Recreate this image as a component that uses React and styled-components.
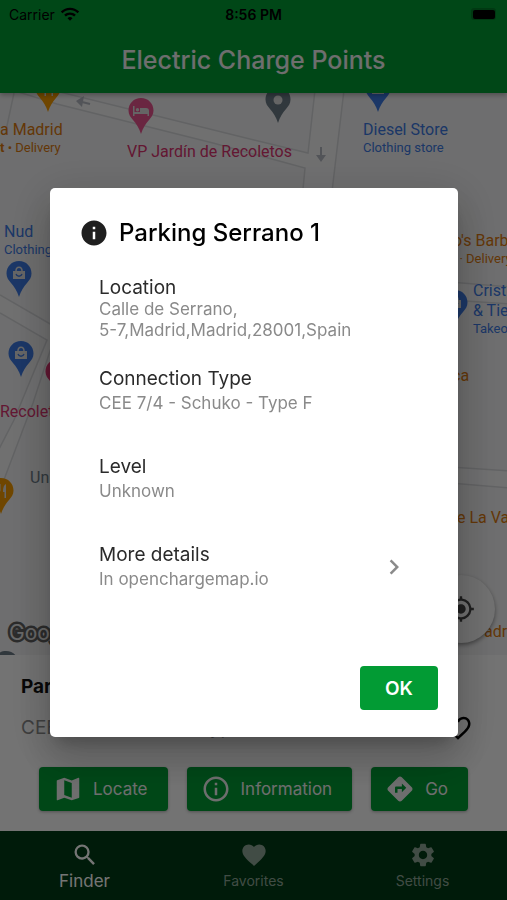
import React from 'react'
import styled, { createGlobalStyle } from 'styled-components'
import {
    MdChevronRight,
    MdDirections,
    MdFavorite,
    MdFavoriteBorder,
    MdInfo,
    MdInfoOutline,
    MdMap,
    MdMyLocation,
    MdSearch,
    MdSettings,
    MdWifi
} from 'react-icons/md'

const GlobalStyle = createGlobalStyle`
    * {
        box-sizing: border-box;
    }
    body {
        margin: 0;
        font-family: Inter, "Liberation Sans", sans-serif;
        background: #fff;
    }
    h1, h2, h3, p, dl, dt, dd {
        margin: 0;
    }
    button {
        font-family: inherit;
        border: 0;
        padding: 0;
        cursor: pointer;
    }
`

const Screen = styled.div`
    display: flex;
    flex-direction: column;
    min-height: 100vh;
`

/* ---------- header ---------- */

const Header = styled.header`
    position: relative;
    z-index: 1;
    background: #009b34;
    box-shadow: 0 2px 5px rgba(0, 0, 0, 0.3);
`
const StatusBar = styled.div`
    display: grid;
    grid-template-columns: 1fr auto 1fr;
    align-items: center;
    height: 28px;
    padding: 0 9px;
    font-size: 14px;
    color: #000;
`
const Carrier = styled.span`
    display: flex;
    align-items: center;
    gap: 5px;
`
const Clock = styled.span`
    font-weight: 600;
`
const Battery = styled.svg`
    justify-self: end;
    width: 28px;
    height: 14px;
`
const Title = styled.h1`
    padding: 15px 0 16px;
    font-size: 25px;
    line-height: 34px;
    font-weight: 500;
    text-align: center;
    color: #f0f0f0;
`

/* ---------- map ---------- */

const Map = styled.main`
    position: relative;
    flex: 1;
    min-height: 300px;
    overflow: hidden;
    background: #f0f0f1;
`
const Roads = styled.svg`
    position: absolute;
    top: 0;
    left: 0;
    width: 507px;
    height: 562px;
`
const Place = styled.div`
    position: absolute;
    left: ${props => props.$x}px;
    top: ${props => props.$y}px;
    padding-top: 1px;
    font-family: Roboto, sans-serif;
    font-size: 16px;
    line-height: 20px;
    white-space: nowrap;
    color: ${props => props.$color};

    small {
        display: block;
        font-size: 13px;
        line-height: 16px;
    }
`
const PinSvg = styled.svg`
    position: absolute;
    left: ${props => props.$x - 13}px;
    top: ${props => props.$y}px;
    width: 26px;
    height: 36px;
`
const GoogleMark = styled.span`
    position: absolute;
    left: 9px;
    bottom: 8px;
    font-size: 21px;
    line-height: 28px;
    font-weight: 400;
    color: #e4e4e4;
    -webkit-text-stroke: 5px #606060;
    paint-order: stroke fill;
`
const LocateMe = styled.button`
    position: absolute;
    right: 12px;
    bottom: 12px;
    display: flex;
    align-items: center;
    justify-content: center;
    width: 68px;
    height: 68px;
    border-radius: 50%;
    background: #f6f6f6;
    color: #444;
    box-shadow: 0 2px 4px rgba(0, 0, 0, 0.4);
`

/* ---------- selected point ---------- */

const Sheet = styled.section`
    padding: 20px 21px;
    background: #fafafa;
`
const SheetTitle = styled.h2`
    font-size: 19px;
    line-height: 24px;
    font-weight: 700;
    color: #111;
`
const SheetRow = styled.div`
    display: flex;
    align-items: center;
    justify-content: space-between;
    padding: 14px 13px 0 0;
    font-size: 19px;
    line-height: 30px;
    color: #8a8a8a;
`
const HeartButton = styled.button`
    display: flex;
    background: none;
    color: #000;
`
const Actions = styled.div`
    display: flex;
    justify-content: center;
    gap: 19px;
    padding-top: 24px;
`
const Button = styled.button`
    display: flex;
    align-items: center;
    gap: 10px;
    height: 44px;
    padding: 0 20px 0 14px;
    border-radius: 4px;
    background: #009b34;
    color: #f0f0f0;
    font-size: 17px;
    font-weight: 400;
    box-shadow: 0 1px 3px rgba(0, 0, 0, 0.3);
`

/* ---------- bottom navigation ---------- */

const Nav = styled.nav`
    display: flex;
    height: 69px;
    background: #003c16;
`
const NavItem = styled.button`
    flex: 1;
    display: flex;
    flex-direction: column;
    align-items: center;
    padding-top: 10px;
    background: none;
    font-size: ${props => (props.$active ? 17 : 14)}px;
    line-height: 24px;
    color: ${props => (props.$active ? '#fff' : '#8fa596')};
`

/* ---------- dialog ---------- */

const Overlay = styled.div`
    position: fixed;
    inset: 0;
    z-index: 2;
    display: flex;
    align-items: center;
    justify-content: center;
    padding: 25px 49px 0 50px;
    background: rgba(0, 0, 0, 0.54);
`
const Dialog = styled.div`
    width: 100%;
    max-width: 560px;
    padding: 30px 20px 27px 29px;
    border-radius: 5px;
    background: #fff;
    box-shadow: 0 11px 15px -7px rgba(0, 0, 0, 0.2), 0 24px 38px 3px rgba(0, 0, 0, 0.14), 0 9px 46px 8px rgba(0, 0, 0, 0.12);
`
const DialogTitle = styled.h2`
    display: flex;
    align-items: center;
    gap: 10px;
    font-size: 24px;
    line-height: 30px;
    font-weight: 500;
    color: #000;

    svg {
        color: #1f1f1f;
    }
`
const Details = styled.dl`
    padding: 23px 0 55px 20px;
`
const Tile = styled.div`
    display: flex;
    align-items: center;
    justify-content: space-between;
    height: ${props => (props.$tight ? 76 : 88)}px;
    padding-right: 29px;
    color: #8a8a8a;
`
const Term = styled.dt`
    font-size: 19px;
    line-height: 22px;
    color: #2b2b2b;
`
const Value = styled.dd`
    padding-top: ${props => (props.$tight ? 0 : 3)}px;
    font-size: 17px;
    line-height: 21px;
    color: #8a8a8a;

    a {
        color: inherit;
        text-decoration: none;
    }
`
const DialogActions = styled.div`
    display: flex;
    justify-content: flex-end;
`
const OkButton = styled.button`
    width: 78px;
    height: 44px;
    border-radius: 4px;
    background: #029b34;
    color: #fff;
    font-size: 19px;
    font-weight: 600;
`

const ORANGE = '#d9780f'
const BLUE = '#3c78e0'
const PINK = '#d8336e'
const SLATE = '#6b7a86'

const glyphs = {
    bag: <g><path d="M7 10h12v8H7z" fill="#ddd" /><path d="M10 10c0-5 6-5 6 0" stroke="#ddd" strokeWidth="1.5" fill="none" /><path d="M10 13c1 3 5 3 6 0" stroke={BLUE} strokeWidth="1.3" fill="none" /></g>,
    bed: <path d="M5 8h1.500v6H12v-4h6q3 0 3 3v5h-1.500v-2h-13v2H5zM9.500 10a1.700 1.700 0 1 1 0 3.400a1.700 1.700 0 0 1 0-3.400" fill="#ddd" />,
    dot: <circle cx="13" cy="13" r="4.500" fill="#ddd" />,
    food: <path d="M8 6v6q0 2 1.500 2v6h1.500v-6q1.500 0 1.500-2V6M18 6q-3 1-3 8h1.500v6H18z" fill="#ddd" />
}

const Pin = ({ x, y, color, glyph }) => (
    <PinSvg $x={x} $y={y} viewBox="0 0 26 36">
        <path d="M13 0C5.800 0 .5 5.500.5 12.500c0 4 2 6.500 4.500 9.500 3.500 4 6 8 8 14 2-6 4.500-10 8-14 2.500-3 4.500-5.500 4.500-9.500C25.500 5.500 20.200 0 13 0z" fill={color} />
        {glyphs[glyph]}
    </PinSvg>
)

const App = () => {
    return (
        <>
            <GlobalStyle />
            <Screen>
                <Header>
                    <StatusBar>
                        <Carrier>Carrier <MdWifi size={20} /></Carrier>
                        <Clock>8:56 PM</Clock>
                        <Battery viewBox="0 0 28 14">
                            <rect x="1" y="1" width="25" height="12" rx="3" fill="#000" opacity="0.2" />
                            <rect x="3" y="3" width="22" height="9" rx="2" fill="#000" />
                        </Battery>
                    </StatusBar>
                    <Title>Electric Charge Points</Title>
                </Header>

                <Map>
                    <Roads viewBox="0 93 507 562">
                        <g fill="#f4f4f5" stroke="#d6d7da" strokeWidth="1.5">
                            <path d="M12 90L57 104L213 143L305 168L302 200L331 200L344 90L315 90L308 153L254 140L60 92" />
                            <path d="M0 295L52 325V345L33 403L5 477L-4 500V455L14 420L47 340L0 313" />
                            <path d="M450 282L510 287V304L450 300" />
                            <path d="M450 467L510 471V488L450 483" />
                        </g>
                        <path d="M14 93L5 135" stroke="#d6d7da" strokeWidth="1.5" />
                        <g fill="none" stroke="#b4b7c0" strokeWidth="2">
                            <path d="M90 104L78 101" />
                            <path d="M321 147V158" />
                        </g>
                        <path d="M84 96L76 101L82 107zM316 155L321 162L326 155z" fill="#b4b7c0" />
                    </Roads>
                    <Pin x={48} y={-17} color="#f29900" glyph="food" />
                    <Pin x={141} y={5} color="#e8548f" glyph="bed" />
                    <Pin x={278} y={-6} color={SLATE} glyph="dot" />
                    <Pin x={378} y={-17} color={BLUE} glyph="bag" />
                    <Pin x={19} y={168} color={BLUE} glyph="bag" />
                    <Pin x={21} y={248} color={BLUE} glyph="bag" />
                    <Pin x={58} y={266} color={PINK} />
                    <Pin x={1} y={385} color="#f29900" glyph="food" />
                    <Pin x={455} y={197} color={BLUE} glyph="bag" />
                    <Pin x={6} y={558} color={SLATE} />
                    <Place $x={0} $y={26} $color={ORANGE}>a Madrid<small><b>t</b> • Delivery</small></Place>
                    <Place $x={127} $y={48} $color={PINK}>VP Jardín de Recoletos</Place>
                    <Place $x={363} $y={26} $color={BLUE}>Diesel Store<small>Clothing store</small></Place>
                    <Place $x={4} $y={128} $color={BLUE}>Nud<small>Clothing store</small></Place>
                    <Place $x={0} $y={308} $color={PINK}>Recoletos</Place>
                    <Place $x={30} $y={374} $color={SLATE}>Universidad</Place>
                    <Place $x={453} $y={137} $color={ORANGE}>o's Barbería<small>&nbsp; · Delivery</small></Place>
                    <Place $x={473} $y={187} $color={BLUE}>Cristina<br />&amp; Tienda<small>Takeout</small></Place>
                    <Place $x={452} $y={272} $color={ORANGE}>ca</Place>
                    <Place $x={457} $y={414} $color={ORANGE}>e La Vaca</Place>
                    <Place $x={484} $y={528} $color={ORANGE}>adrid</Place>
                    <GoogleMark>Google</GoogleMark>
                    <LocateMe aria-label="My location"><MdMyLocation size={28} /></LocateMe>
                </Map>

                <Sheet>
                    <SheetTitle>Parking Serrano 1</SheetTitle>
                    <SheetRow>
                        CEE 7/4 - Schuko - Type F
                        <HeartButton aria-label="Add to favorites"><MdFavoriteBorder size={30} /></HeartButton>
                    </SheetRow>
                    <Actions>
                        <Button><MdMap size={30} />Locate</Button>
                        <Button><MdInfoOutline size={30} />Information</Button>
                        <Button><MdDirections size={30} />Go</Button>
                    </Actions>
                </Sheet>

                <Nav>
                    <NavItem $active><MdSearch size={28} />Finder</NavItem>
                    <NavItem><MdFavorite size={28} />Favorites</NavItem>
                    <NavItem><MdSettings size={28} />Settings</NavItem>
                </Nav>
            </Screen>

            <Overlay>
                <Dialog role="dialog" aria-modal="true" aria-labelledby="point-name">
                    <DialogTitle id="point-name"><MdInfo size={30} />Parking Serrano 1</DialogTitle>
                    <Details>
                        <Tile $tight>
                            <div>
                                <Term>Location</Term>
                                <Value $tight>Calle de Serrano,<br />5-7,Madrid,Madrid,28001,Spain</Value>
                            </div>
                        </Tile>
                        <Tile>
                            <div>
                                <Term>Connection Type</Term>
                                <Value>CEE 7/4 - Schuko - Type F</Value>
                            </div>
                        </Tile>
                        <Tile>
                            <div>
                                <Term>Level</Term>
                                <Value>Unknown</Value>
                            </div>
                        </Tile>
                        <Tile>
                            <div>
                                <Term>More details</Term>
                                <Value><a href="#details">In openchargemap.io</a></Value>
                            </div>
                            <MdChevronRight size={30} />
                        </Tile>
                    </Details>
                    <DialogActions>
                        <OkButton>OK</OkButton>
                    </DialogActions>
                </Dialog>
            </Overlay>
        </>
    )
}

export default App
